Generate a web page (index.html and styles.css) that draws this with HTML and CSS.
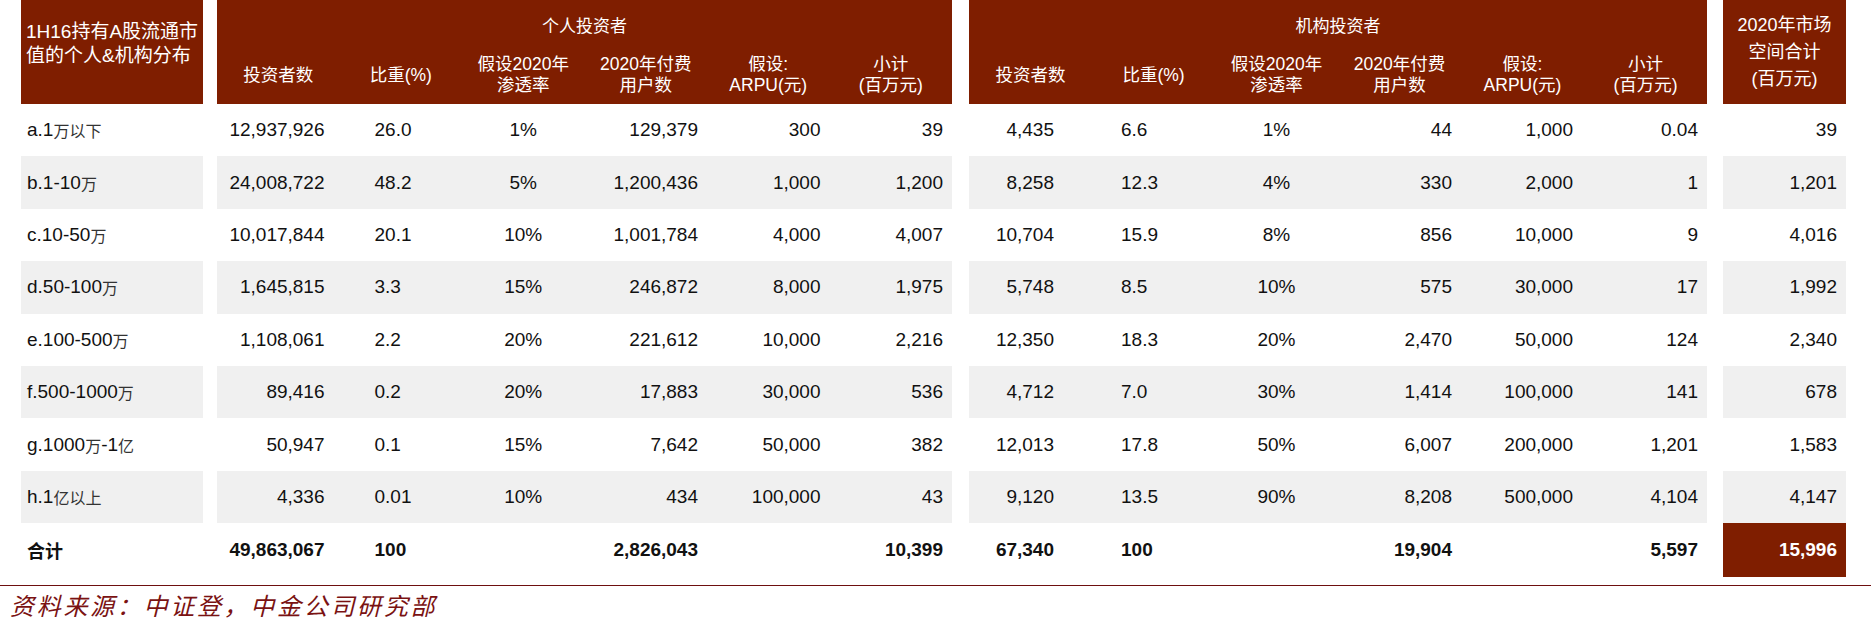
FILE: index.html
```html
<!DOCTYPE html>
<html lang="zh-CN">
<head>
<meta charset="utf-8">
<title>1H16持有A股流通市值的个人&机构分布</title>
<link rel="stylesheet" href="styles.css">
</head>
<body>
<div class="table">
  <div class="row head">
    <div class="seg s-label hd"><div class="label-title">1H16持有A股流通市<br>值的个人&amp;机构分布</div></div>
    <div class="seg s-grp s-a hd">
      <div class="grp-title">个人投资者</div>
      <div class="sub">
        <div>投资者数</div><div>比重(%)</div><div>假设2020年<br>渗透率</div><div>2020年付费<br>用户数</div><div>假设:<br>ARPU(元)</div><div>小计<br>(百万元)</div>
      </div>
    </div>
    <div class="seg s-grp s-b hd">
      <div class="grp-title">机构投资者</div>
      <div class="sub">
        <div>投资者数</div><div>比重(%)</div><div>假设2020年<br>渗透率</div><div>2020年付费<br>用户数</div><div>假设:<br>ARPU(元)</div><div>小计<br>(百万元)</div>
      </div>
    </div>
    <div class="seg s-tot hd"><div class="tot-title">2020年市场<br>空间合计<br>(百万元)</div></div>
  </div>

  <div class="row">
    <div class="seg s-label">a.1<span class="cj">万以下</span></div>
    <div class="seg s-grp s-a cols"><div>12,937,926</div><div>26.0</div><div>1%</div><div>129,379</div><div>300</div><div>39</div></div>
    <div class="seg s-grp s-b cols"><div>4,435</div><div>6.6</div><div>1%</div><div>44</div><div>1,000</div><div>0.04</div></div>
    <div class="seg s-tot">39</div>
  </div>
  <div class="row alt">
    <div class="seg s-label">b.1-10<span class="cj">万</span></div>
    <div class="seg s-grp s-a cols"><div>24,008,722</div><div>48.2</div><div>5%</div><div>1,200,436</div><div>1,000</div><div>1,200</div></div>
    <div class="seg s-grp s-b cols"><div>8,258</div><div>12.3</div><div>4%</div><div>330</div><div>2,000</div><div>1</div></div>
    <div class="seg s-tot">1,201</div>
  </div>
  <div class="row">
    <div class="seg s-label">c.10-50<span class="cj">万</span></div>
    <div class="seg s-grp s-a cols"><div>10,017,844</div><div>20.1</div><div>10%</div><div>1,001,784</div><div>4,000</div><div>4,007</div></div>
    <div class="seg s-grp s-b cols"><div>10,704</div><div>15.9</div><div>8%</div><div>856</div><div>10,000</div><div>9</div></div>
    <div class="seg s-tot">4,016</div>
  </div>
  <div class="row alt">
    <div class="seg s-label">d.50-100<span class="cj">万</span></div>
    <div class="seg s-grp s-a cols"><div>1,645,815</div><div>3.3</div><div>15%</div><div>246,872</div><div>8,000</div><div>1,975</div></div>
    <div class="seg s-grp s-b cols"><div>5,748</div><div>8.5</div><div>10%</div><div>575</div><div>30,000</div><div>17</div></div>
    <div class="seg s-tot">1,992</div>
  </div>
  <div class="row">
    <div class="seg s-label">e.100-500<span class="cj">万</span></div>
    <div class="seg s-grp s-a cols"><div>1,108,061</div><div>2.2</div><div>20%</div><div>221,612</div><div>10,000</div><div>2,216</div></div>
    <div class="seg s-grp s-b cols"><div>12,350</div><div>18.3</div><div>20%</div><div>2,470</div><div>50,000</div><div>124</div></div>
    <div class="seg s-tot">2,340</div>
  </div>
  <div class="row alt">
    <div class="seg s-label">f.500-1000<span class="cj">万</span></div>
    <div class="seg s-grp s-a cols"><div>89,416</div><div>0.2</div><div>20%</div><div>17,883</div><div>30,000</div><div>536</div></div>
    <div class="seg s-grp s-b cols"><div>4,712</div><div>7.0</div><div>30%</div><div>1,414</div><div>100,000</div><div>141</div></div>
    <div class="seg s-tot">678</div>
  </div>
  <div class="row">
    <div class="seg s-label">g.1000<span class="cj">万</span>-1<span class="cj">亿</span></div>
    <div class="seg s-grp s-a cols"><div>50,947</div><div>0.1</div><div>15%</div><div>7,642</div><div>50,000</div><div>382</div></div>
    <div class="seg s-grp s-b cols"><div>12,013</div><div>17.8</div><div>50%</div><div>6,007</div><div>200,000</div><div>1,201</div></div>
    <div class="seg s-tot">1,583</div>
  </div>
  <div class="row alt">
    <div class="seg s-label">h.1<span class="cj">亿以上</span></div>
    <div class="seg s-grp s-a cols"><div>4,336</div><div>0.01</div><div>10%</div><div>434</div><div>100,000</div><div>43</div></div>
    <div class="seg s-grp s-b cols"><div>9,120</div><div>13.5</div><div>90%</div><div>8,208</div><div>500,000</div><div>4,104</div></div>
    <div class="seg s-tot">4,147</div>
  </div>
  <div class="row total">
    <div class="seg s-label">合计</div>
    <div class="seg s-grp s-a cols"><div>49,863,067</div><div>100</div><div></div><div>2,826,043</div><div></div><div>10,399</div></div>
    <div class="seg s-grp s-b cols"><div>67,340</div><div>100</div><div></div><div>19,904</div><div></div><div>5,597</div></div>
    <div class="seg s-tot grand">15,996</div>
  </div>
</div>
<div class="rule"></div>
<div class="source">资料来源：中证登，中金公司研究部</div>
</body>
</html>
```

FILE: styles.css
```css
html, body {
  margin: 0;
  padding: 0;
  background: #ffffff;
}

body {
  width: 1871px;
  height: 620px;
  overflow: hidden;
  font-family: "Liberation Sans", Arial, "Noto Sans CJK SC", sans-serif;
  color: #111111;
}

.table {
  display: flex;
  flex-direction: column;
  padding-left: 21px;
}

.row {
  display: flex;
  height: 52.4px;
  font-size: 19px;
}

.seg {
  display: flex;
  align-items: center;
  box-sizing: border-box;
}

.s-label { width: 182px; padding-left: 6px; }
.s-a { width: 735px; margin-left: 14px; }
.s-b { width: 738px; margin-left: 17px; }
.s-tot { width: 123px; margin-left: 16px; justify-content: flex-end; padding-right: 9px; }

.alt .seg { background: #f0f0f0; }

.cj {
  font-family: "Noto Sans CJK SC", sans-serif;
  font-size: 16px;
  color: #333333;
}

/* data columns */
.cols {
  display: grid;
  grid-template-columns: repeat(6, 1fr);
  align-items: center;
}

.cols > div { white-space: nowrap; }

.cols > div:nth-child(1) { text-align: right; }
.cols > div:nth-child(2) { text-align: left; }
.cols > div:nth-child(3) { text-align: center; }
.cols > div:nth-child(4),
.cols > div:nth-child(5),
.cols > div:nth-child(6) { text-align: right; padding-right: 9px; }

.s-a.cols > div:nth-child(1) { padding-right: 15px; }
.s-a.cols > div:nth-child(2) { padding-left: 35px; }
.s-b.cols > div:nth-child(1) { padding-right: 38px; }
.s-b.cols > div:nth-child(2) { padding-left: 29px; }
.s-b.cols > div:nth-child(5) { padding-right: 11px; }

/* header */
.head {
  height: 104px;
  color: #ffffff;
  font-family: "Liberation Sans", Arial, "Noto Sans CJK SC", sans-serif;
}

.head .hd { background: #7f1e00; }

.label-title {
  font-size: 19px;
  line-height: 24px;
  padding-top: 20px;
  padding-left: 0;
}

.s-label.hd { align-items: flex-start; padding-left: 5px; }

.s-grp.hd {
  flex-direction: column;
  align-items: stretch;
}

.grp-title {
  height: 48px;
  display: flex;
  align-items: center;
  justify-content: center;
  font-size: 17px;
}

.sub {
  flex: 1;
  display: grid;
  grid-template-columns: repeat(6, 1fr);
  align-items: center;
  text-align: center;
  font-size: 17.5px;
  line-height: 21px;
  padding-bottom: 2px;
}

.s-tot.hd { justify-content: center; padding-right: 0; }

.tot-title {
  text-align: center;
  font-size: 18px;
  line-height: 27px;
}

/* total row */
.total {
  height: 54px;
  font-weight: bold;
}

.total .s-label {
  font-family: "Noto Sans CJK SC", sans-serif;
  font-size: 18px;
}

.grand {
  background: #7f1e00;
  color: #ffffff;
}

.rule {
  margin-top: 8px;
  height: 1px;
  background: #6e0f0f;
}

.source {
  padding-left: 10px;
  padding-top: 4px;
  font-family: "Noto Sans CJK SC", serif;
  font-style: italic;
  font-size: 24px;
  letter-spacing: 2.7px;
  line-height: 30px;
  color: #7a1212;
}
```
